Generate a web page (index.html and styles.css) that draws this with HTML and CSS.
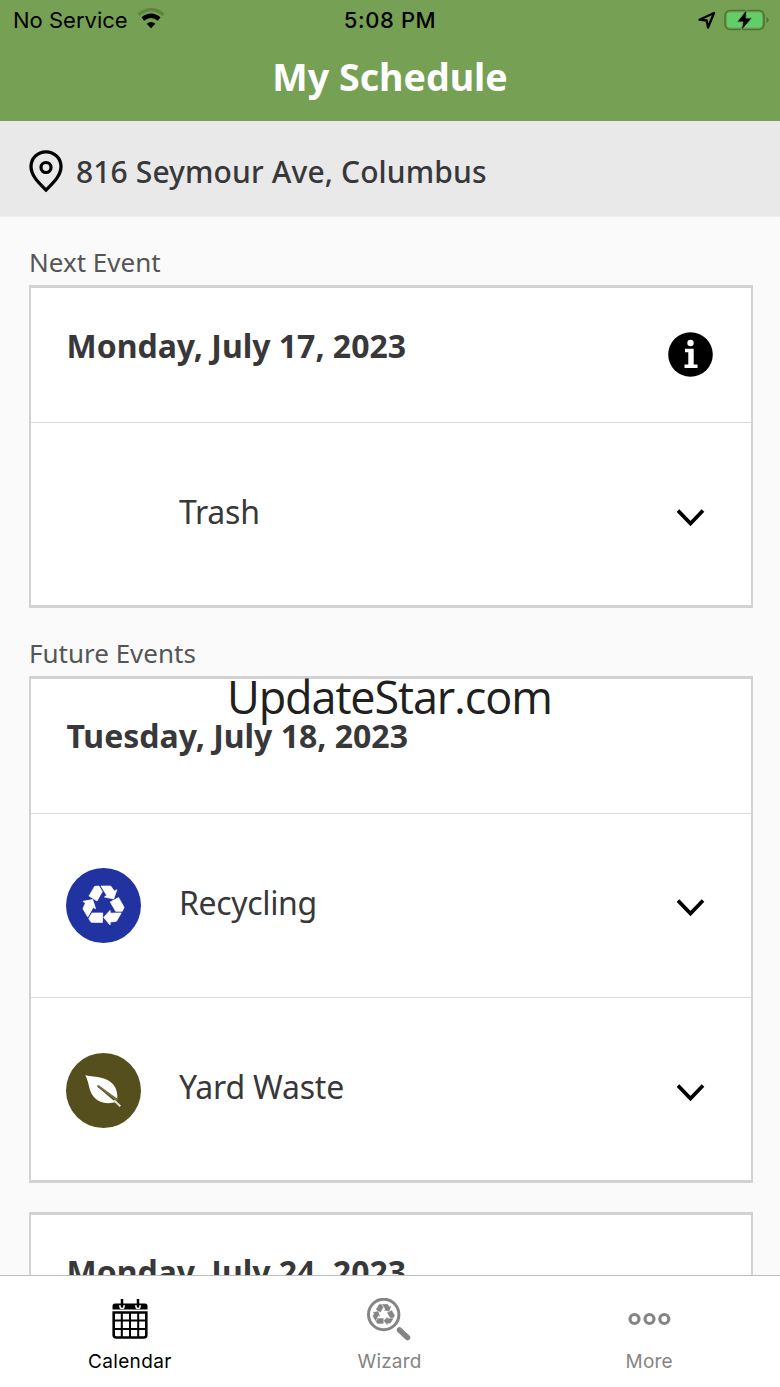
FILE: index.html
```
<!DOCTYPE html>
<html lang="en">
<head>
<meta charset="utf-8">
<title>My Schedule</title>
<link rel="stylesheet" href="styles.css">
</head>
<body>
<svg class="defs" aria-hidden="true">
  <defs>
    <g id="recycle-arm"><path d="M-7 -58H22L33 -43L41 -47L31 -19L3 -25L10 -30L0 -46Z"/><path d="M-43 -28L-26 -57L-13 -58L-3 -41L-19 -13Z"/></g>
    <g id="recycle" stroke-width="2" stroke-linejoin="round"><use href="#recycle-arm"/><use href="#recycle-arm" transform="rotate(120)"/><use href="#recycle-arm" transform="rotate(240)"/></g>
    <path id="chevron" d="M1 1.500L13.500 14.500L26 1.500" fill="none" stroke="#000" stroke-width="3.700"/>
  </defs>
</svg>
<div class="screen">
  <header class="header">
    <div class="status">
      <div class="status-left"><span class="carrier">No Service</span>
        <svg class="wifi" width="28" height="22" viewBox="0 0 28 22"><g fill="none"><path d="M1.500 6.800Q14 -3.600 26.500 6.800" stroke="#5d873f" stroke-width="3.300"/><path d="M5.800 11Q14 4.500 22.200 11" stroke="#000" stroke-width="4.200"/></g><path d="M9.600 15.700Q14 12.300 18.400 15.700L14 20.300Z"/></svg>
      </div>
      <span class="time">5:08 PM</span>
      <div class="status-right">
        <svg width="18" height="18" viewBox="0 0 18 18"><path d="M16 2L1.500 8.700L8.700 9.500L10 16.500Z" fill="none" stroke="#000" stroke-width="2.300" stroke-linejoin="round"/></svg>
        <svg width="47" height="24" viewBox="0 0 47 24"><rect x="2" y="2.500" width="39" height="19" rx="5" fill="none" stroke="#4e7334" stroke-width="1.600"/><rect x="4" y="4.500" width="35" height="15" rx="3" fill="#62ce69"/><path d="M43.500 9Q48 12 43.500 15Z" fill="#4e7334"/><path d="M24 1L14 14H20L18 23L29 10H23Z" stroke="#76a155" stroke-width="1"/></svg>
      </div>
    </div>
    <h1 class="title"><span>My Schedule</span></h1>
  </header>
  <div class="address">
    <svg width="34" height="43" viewBox="0 0 34 43"><path d="M17 1.800C8.500 1.800 2 8.400 2 16.500C2 26 10.500 33.500 17 40C23.500 33.500 32 26 32 16.500C32 8.400 25.500 1.800 17 1.800Z" fill="none" stroke="#000" stroke-width="3.300"/><circle cx="17" cy="17.500" r="5" fill="none" stroke="#000" stroke-width="3.200"/></svg>
    <span class="address-text">816 Seymour Ave, Columbus</span>
  </div>
  <main class="content">
    <h2 class="label next">Next Event</h2>
    <section class="card">
      <div class="date-row"><h3 class="date">Monday, July 17, 2023</h3>
        <svg class="info" width="46" height="46" viewBox="0 0 46 46"><circle cx="22.500" cy="22.500" r="22.300"/><path d="M17 16.700H25.700V32.500H29.500V36H16.500V32.500H20.300V20.300H17Z" fill="#fff"/><circle cx="22.500" cy="11" r="3.200" fill="#fff"/></svg>
      </div>
      <div class="event"><span class="icon"></span><span class="name trash">Trash</span><svg class="chevron" width="28" height="18"><use href="#chevron"/></svg></div>
    </section>
    <h2 class="label future">Future Events</h2>
    <section class="card">
      <div class="date-row raised"><h3 class="date">Tuesday, July 18, 2023</h3></div>
      <div class="event"><span class="icon blue"><svg width="75" height="75" viewBox="0 0 225 225"><use href="#recycle" transform="translate(112 112)" fill="#fff" stroke="#fff"/></svg></span><span class="name recycling">Recycling</span><svg class="chevron" width="28" height="18"><use href="#chevron"/></svg></div>
      <div class="event"><span class="icon olive"><svg width="75" height="75" viewBox="0 0 225 225"><path d="M58 67C91 73 123 72 143 96C152 107 155 123 154 137L97 97Q93 96 94 101L149 148C116 155 89 147 76 121C68 104 68 86 58 67Z" fill="#fff"/><path d="M144 142L163 160" stroke="#e1dfd4" stroke-width="6"/><path d="M96 98L154 142" stroke="#77724d" stroke-width="5"/></svg></span><span class="name">Yard Waste</span><svg class="chevron" width="28" height="18"><use href="#chevron"/></svg></div>
    </section>
    <section class="card later">
      <div class="date-row raised"><h3 class="date">Monday, July 24, 2023</h3></div>
    </section>
  </main>
  <nav class="tabs">
    <div class="tab active">
      <svg width="44" height="44" viewBox="0 0 44 44"><path d="M4.500 11.500V8Q4.500 5.500 7 5.500H37Q39.500 5.500 39.500 8V11.500Z"/><path d="M5.700 14.500H38.300V37Q38.300 39.500 35.800 39.500H8.200Q5.700 39.500 5.700 37Z" fill="none" stroke="#000" stroke-width="2.600"/><path d="M5 22.500H39M5 31H39M13.800 15V40M22 15V40M30.200 15V40" stroke="#000" stroke-width="2"/><path d="M12 7V8.500A2 2 0 0 0 16 8.500V7M28 7V8.500A2 2 0 0 0 32 8.500V7" fill="none" stroke="#fff" stroke-width="1.500"/><path d="M14 1V8M30 1V8" stroke="#000" stroke-width="2.500"/></svg>
      <span class="tab-label calendar">Calendar</span>
    </div>
    <div class="tab">
      <svg width="48" height="44" viewBox="0 0 48 44"><circle cx="18.700" cy="16.500" r="15.200" fill="none" stroke="#858585" stroke-width="3"/><use href="#recycle" transform="translate(18.700 16.500) scale(.175)" fill="#858585" stroke="#858585"/><path d="M34.500 32L42.500 39.500" stroke="#858585" stroke-width="5.500" stroke-linecap="round"/></svg>
      <span class="tab-label">Wizard</span>
    </div>
    <div class="tab">
      <svg width="44" height="44" viewBox="0 0 44 44"><g fill="none" stroke="#858585" stroke-width="3.200"><circle cx="7.500" cy="21" r="4.500"/><circle cx="22.500" cy="21" r="4.500"/><circle cx="37.300" cy="21" r="4.500"/></g></svg>
      <span class="tab-label">More</span>
    </div>
  </nav>
  <div class="watermark">UpdateStar.com</div>
</div>
</body>
</html>
```
FILE: styles.css
```
* { box-sizing: border-box; }
body { margin: 0; font-family: "Noto Sans", "Open Sans", sans-serif; color: #38383a; }
.defs { position: absolute; width: 0; height: 0; }
svg { display: block; flex: none; }
h1, h2, h3 { margin: 0; }
.screen { position: relative; display: flex; flex-direction: column; width: 780px; height: 1387px; overflow: hidden; background: #fafafa; }
.header { flex: none; height: 121px; background: #76a155; }
.status { display: grid; grid-template-columns: 1fr auto 1fr; height: 40px; align-items: center; padding: 0 10px 0 13px; font-family: Inter, sans-serif; font-size: 22px; color: #000; }
.status-left { display: flex; align-items: center; gap: 9px; }
.status-right { display: flex; align-items: center; justify-content: flex-end; gap: 7px; }
.wifi { margin-top: -2px; }
.time { font-weight: 500; letter-spacing: .6px; margin-right: 3px; }
.title { color: #fff; font-size: 37.6px; line-height: 52px; font-weight: 700; text-align: center; padding-top: 11px; }
.address { flex: none; display: flex; align-items: center; height: 96px; padding: 5px 29px 0; gap: 13px; background: #e9e9e9; border-bottom: 1px solid #f1f1f1; }
.address-text { font-size: 30px; font-weight: 500; letter-spacing: .12px; white-space: nowrap; }
.content { flex: 1; min-height: 0; overflow: hidden; padding: 0 27px 0 29px; }
.label { font-size: 26px; line-height: 36px; font-weight: 400; color: #555; padding-top: 27px; height: 68px; }
.card { background: #fff; border: 2px solid #d2d2d2; border-top-width: 3px; border-bottom-width: 3px; }
.date-row { display: flex; justify-content: space-between; height: 134px; padding: 36px 37px 0 35.5px; }
.raised { padding-top: 35px; }
.date { font-size: 32px; line-height: 44px; font-weight: 700; white-space: nowrap; }
.info { margin-top: 8px; }
.event { display: flex; align-items: center; height: 184px; padding: 0 46px 0 35px; border-top: 1px solid #d9d9d9; }
.event:last-child { height: 183px; padding-top: 2px; }
.icon { width: 75px; height: 75px; border-radius: 50%; }
.blue { background: #2033a0; }
.olive { background: #554f1e; }
.name { font-size: 32px; line-height: 44px; letter-spacing: -.2px; margin-left: 38px; padding-bottom: 6px; }
.recycling { letter-spacing: -.35px; }
.chevron { margin-left: auto; margin-top: 5px; }
.later { margin-top: 29px; }
.tabs { flex: none; display: grid; grid-template-columns: repeat(3, 1fr); height: 112px; padding-right: 1px; border-top: 1px solid #bdbdbd; background: #fff; }
.tab { display: flex; flex-direction: column; align-items: center; padding-top: 22px; color: #858585; font: 400 19px/24px Inter, sans-serif; }
.tab-label { margin-top: 8px; letter-spacing: .15px; }
.tab.active { color: #000; }
.active .tab-label { letter-spacing: .35px; }
.watermark { position: absolute; left: 227px; top: 666px; font: 400 45px/62px "Open Sans", sans-serif; letter-spacing: -1.12px; color: #202020; white-space: nowrap; }
```
